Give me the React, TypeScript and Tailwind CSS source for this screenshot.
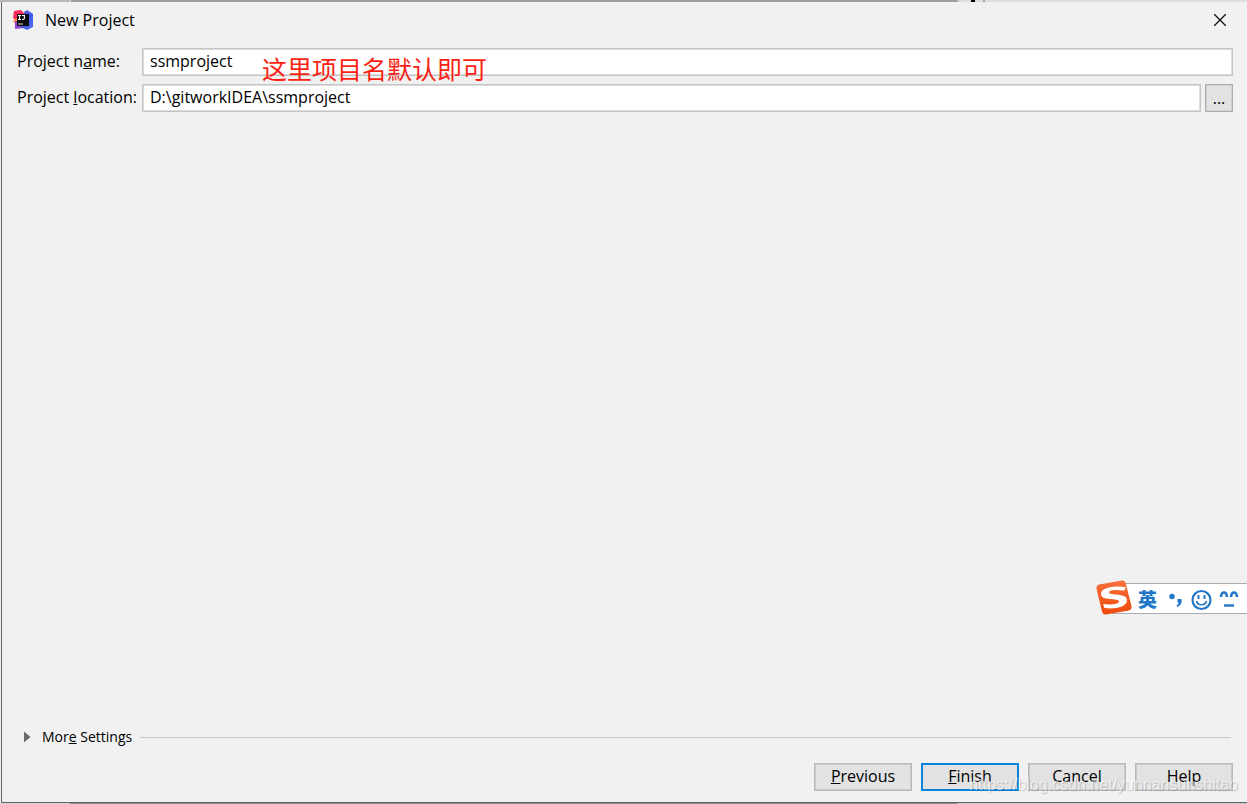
import React, { useState } from 'react';

const IdeaLogo: React.FC = () => (
  <svg className="h-5 w-5" viewBox="0 0 20 20" aria-hidden="true">
    <defs>
      <linearGradient id="idea-blue" x1="0" y1="0" x2="1" y2="1">
        <stop offset="0" stopColor="#7a4fc4" />
        <stop offset="0.5" stopColor="#3b5bf0" />
        <stop offset="1" stopColor="#5a6be8" />
      </linearGradient>
    </defs>
    <path d="M1 1L8 0L12 4L9 11L4 11L0 8Z" fill="#fe2a5d" />
    <path d="M0 11L4 8V16Z" fill="#fb8a2c" />
    <path d="M2 11L9 13L11 18L2 19Z" fill="#8f45d8" />
    <path d="M11 2L14 0L20 4V17L14 20L8 17Z" fill="url(#idea-blue)" />
    <rect x="4" y="4" width="12" height="12" fill="#0b0b0f" />
    <path d="M5 5.5H8M6.5 5.5V9.5M5 9.5H8M9 5.5H12M11.4 5.5V8.5L10.5 9.5H9" fill="none" stroke="#fff" strokeWidth="1.1" />
    <path d="M5 14H10" stroke="#c8c8c8" strokeWidth="1.1" />
  </svg>
);

const SogouLogo: React.FC = () => (
  <svg className="h-9 w-9" viewBox="0 0 36 36" aria-hidden="true">
    <defs>
      <linearGradient id="sogou-orange" x1="0" y1="0" x2="0" y2="1">
        <stop offset="0" stopColor="#f9703c" />
        <stop offset="1" stopColor="#ed4a0b" />
      </linearGradient>
    </defs>
    <path
      d="M3 4.5L26 .5Q29 0 29.7 3L35.5 26Q36 29.5 33 30.5L10 34.5Q7 35 6.2 32L.5 9Q0 5.5 3 4.5Z"
      fill="url(#sogou-orange)"
    />
    <path
      d="M30 7.2C20 5.5 5 7 5 14C5 21.5 23 17.5 23 21.5C23 24.5 14 25 7 24L8.5 28C18 29.5 31 27.5 31 20C31 12.5 13 16 13 12.5C13 9.5 22 9.5 28 10.8Z"
      fill="#fff"
    />
  </svg>
);

const ImeBar: React.FC = () => (
  <div className="absolute right-0 top-[580px] flex h-9 w-[151px] items-start">
    <div className="absolute left-4 right-0 top-[3px] h-[31px] border-y border-[#a9adb3] bg-white" />
    <div className="relative">
      <SogouLogo />
    </div>
    <span className="relative ml-1.5 w-5 pt-1.5 text-[19px] leading-7 font-black text-[#2277c8]">英</span>
    <svg className="relative ml-2.5 mt-1.5 h-7 w-[72px]" viewBox="0 0 72 28" fill="none" stroke="#2277c8" aria-hidden="true">
      <circle cx="4" cy="10.5" r="2.7" fill="#2277c8" stroke="none" />
      <path d="M9.5 13H13.5Q14.5 18.5 9.5 21L8.5 19.5Q11 18 10.5 16.5H9.5Z" fill="#2277c8" stroke="none" />
      <circle cx="33.5" cy="14" r="9" strokeWidth="2.2" />
      <path d="M30.5 9V13M36.5 9V13" strokeWidth="2" />
      <path d="M28.5 15C29.5 20 37.5 20 38.5 15" strokeWidth="1.6" />
      <path d="M53 11C53.5 5 58.5 5 59 11M63 11C63.5 5 68.5 5 69 11" strokeWidth="2.6" />
      <path d="M56 19.5H66" strokeWidth="2.4" />
    </svg>
  </div>
);

type FieldProps = {
  id: string;
  label: React.ReactNode;
  value: string;
  onChange: (value: string) => void;
  children?: React.ReactNode;
};

const Field: React.FC<FieldProps> = ({ id, label, value, onChange, children }) => (
  <div className="flex items-center">
    <label htmlFor={id} className="w-[125px] shrink-0 whitespace-nowrap pb-0.5">
      {label}
    </label>
    <input
      id={id}
      value={value}
      onChange={(e) => onChange(e.target.value)}
      className="h-7 min-w-0 flex-1 border border-[#c4c4c4] bg-white px-[7px] pb-0.5 outline-none inset-ring inset-ring-[#dcdcdc]"
    />
    {children}
  </div>
);

const buttons = [
  { key: 'P', rest: 'revious', mnemonic: true, primary: false },
  { key: 'F', rest: 'inish', mnemonic: true, primary: true },
  { key: 'C', rest: 'ancel', mnemonic: false, primary: false },
  { key: 'H', rest: 'elp', mnemonic: false, primary: false },
];

const App: React.FC = () => {
  const [name, setName] = useState('ssmproject');
  const [location, setLocation] = useState('D:\\gitworkIDEA\\ssmproject');

  return (
    <div className="relative flex min-h-screen flex-col overflow-hidden bg-[#f1f1f1] font-['Open_Sans','Noto_Sans_CJK_SC',sans-serif] text-base leading-5 text-black">
      <div className="flex h-0.5 shrink-0">
        <div className="w-[70px] bg-[#b8b8b8]" />
        <div className="flex-1 border-l border-[#e0e0e0] bg-[#9e9e9e]" />
        <div className="relative w-[290px] border-l-2 border-[#bcbcbc] bg-[#dedede]">
          <div className="absolute left-3 top-0 h-0.5 w-1 bg-black" />
          <div className="absolute left-6 top-0 h-0.5 w-0.5 bg-[#aaaaaa]" />
        </div>
      </div>

      <main className="ml-px flex flex-1 flex-col border-b border-l border-[#646464] pl-[15px] pr-3.5">
        <header className="flex h-9 items-center">
          <div className="-ml-1 mr-3">
            <IdeaLogo />
          </div>
          <h1 className="flex-1">New Project</h1>
          <button type="button" aria-label="Close" className="mr-px flex h-6 w-6 items-center justify-center">
            <svg className="h-3 w-3" viewBox="0 0 12 12" stroke="#111" strokeWidth="1.3" aria-hidden="true">
              <path d="M0 0L12 12M12 0L0 12" />
            </svg>
          </button>
        </header>

        <form className="mt-2.5 flex flex-col gap-2" onSubmit={(e) => e.preventDefault()}>
          <Field id="project-name" label={<>Project n<u>a</u>me:</>} value={name} onChange={setName} />
          <Field
            id="project-location"
            label={<>Project <u>l</u>ocation:</>}
            value={location}
            onChange={setLocation}
          >
            <button
              type="button"
              aria-label="Browse"
              className="ml-1 h-7 w-7 border border-[#adadad] bg-[#e2e2e2] inset-ring inset-ring-[#cfcfcf]"
            >
              ...
            </button>
          </Field>
        </form>

        <div className="mt-auto flex h-6 items-center">
          <button type="button" className="flex items-center text-sm leading-5">
            <svg className="ml-1.5 mr-[11px] h-3 w-2" viewBox="0 0 8 12" aria-hidden="true">
              <path d="M1 0.5L7.5 6L1 11.5Z" fill="#6a6a6a" />
            </svg>
            <span>Mor<u>e</u> Settings</span>
          </button>
          <div className="ml-2 mr-0.5 flex-1 border-t border-[#c9c9c9]" />
        </div>

        <footer className="mb-[11px] mt-[14px] flex justify-end gap-[9px]">
          {buttons.map(({ key, rest, mnemonic, primary }) => (
            <button
              key={key}
              type="button"
              className={`h-7 w-[98px] bg-[#e2e2e2] pb-0.5 ${primary ? 'border-2 border-[#0a84dc]' : 'border border-[#b9b9b9] inset-ring inset-ring-[#cbcbcb]'}`}
            >
              {mnemonic ? <u>{key}</u> : key}
              {rest}
            </button>
          ))}
        </footer>
      </main>
      <div className="flex h-px shrink-0">
        <div className="w-[70px] bg-[#d5d5d5]" />
        <div className="flex-1 bg-[#8a8a8a]" />
        <div className="w-[290px] bg-[#c4c4c4]" />
      </div>

      <p className="pointer-events-none absolute left-[262px] top-[50px] whitespace-nowrap font-['Noto_Sans_CJK_SC',sans-serif] text-[25px] leading-9 text-[#fb1f14]">
        这里项目名默认即可
      </p>
      <ImeBar />
      <p className="pointer-events-none absolute bottom-[7px] right-[9px] whitespace-nowrap font-['Liberation_Sans',sans-serif] text-base leading-6 text-white/60 [text-shadow:1px_1px_1px_#00000030]">
        https://blog.csdn.net/yunnansunshitao
      </p>
    </div>
  );
};

export default App;
